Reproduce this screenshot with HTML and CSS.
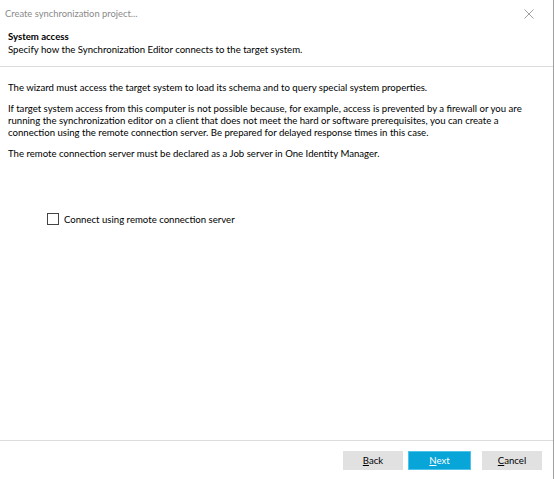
FILE: index.html
```html
<!DOCTYPE html>
<html>
<head>
<meta charset="utf-8">
<link rel="stylesheet" href="styles.css">
</head>
<body>
<div class="window">
  <div class="titlebar">
    <span class="title">Create synchronization project...</span>
    <svg class="close" width="10" height="10" viewBox="0 0 10 10"><path d="M0.5 0.5 L9.5 9.5 M9.5 0.5 L0.5 9.5" stroke="#a0a0a0" stroke-width="1" fill="none"/></svg>
  </div>
  <div class="header">
    <div class="h-title">System access</div>
    <div class="h-sub">Specify how the Synchronization Editor connects to the target system.</div>
  </div>
  <div class="content">
    <p>The wizard must access the target system to load its schema and to query special system properties.</p>
    <p>If target system access from this computer is not possible because, for example, access is prevented by a firewall or you are running the synchronization editor on a client that does not meet the hard or software prerequisites, you can create a connection using the remote connection server. Be prepared for delayed response times in this case.</p>
    <p>The remote connection server must be declared as a Job server in One Identity Manager.</p>
    <label class="check"><span class="box"></span><span>Connect using remote connection server</span></label>
  </div>
  <div class="footer">
    <button class="btn"><u>B</u>ack</button>
    <button class="btn primary"><u>N</u>ext</button>
    <button class="btn"><u>C</u>ancel</button>
  </div>
</div>
</body>
</html>
```
FILE: styles.css
```css
html, body { margin: 0; padding: 0; background: #fff; }
body { font-family: Lato, "Open Sans", sans-serif; font-size: 9.6px; color: #000; }
.window { width: 553px; height: 479px; border-right: 1px solid #a0a0a0; display: flex; flex-direction: column; }
.titlebar { height: 26px; display: flex; align-items: center; justify-content: space-between; padding: 0 19px 0 5px; }
.title { color: #8a8a8a; font-size: 9.4px; }
.close { margin-top: 1px; }
.header { height: 40px; padding: 0 8px; border-bottom: 1px solid #dcdcdc; }
.h-title { font-weight: bold; line-height: 12px; margin-top: 5px; }
.h-sub { line-height: 12px; margin-top: 1px; }
.content { flex: 1; padding: 15px 8px 0 8px; border-bottom: 1px solid #dcdcdc; }
.content p { margin: 0 0 9px 0; line-height: 12px; }
.check { display: flex; align-items: center; gap: 5px; margin: 53px 0 0 39px; }
.box { width: 10px; height: 10px; border: 1px solid #444; background: #fff; }
.footer { height: 38px; display: flex; justify-content: flex-end; align-items: center; gap: 5px; padding: 0 11px 0 0; }
.btn { font-family: inherit; font-size: 9.6px; width: 60px; height: 19px; background: #e1e1e1; border: 1px solid #e1e1e1; color: #000; padding: 0; }
.btn.primary { background: #07a5d8; border-color: #4fc3ea; color: #fff; width: 63px; margin-right: 6px; }
.btn u { text-decoration: underline; }
```
